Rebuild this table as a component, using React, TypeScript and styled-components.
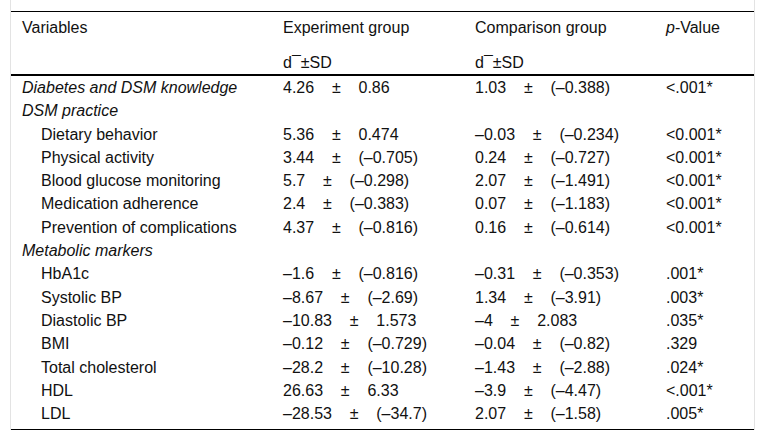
import React from "react";
import styled, { createGlobalStyle } from "styled-components";

const Global = createGlobalStyle`
  html, body { margin: 0; padding: 0; background: #fff; }
  body { font-family: "Liberation Sans", Arial, sans-serif; }
`;

const Frame = styled.div`
  margin: 0 10px;
  width: 743px;
  padding-top: 11px;
  border-left: 1px solid #e3e3e3;
  border-right: 1px solid #e3e3e3;
`;

const Table = styled.table`
  width: 743px;
  table-layout: fixed;
  border-collapse: collapse;
  border-top: 1px solid #000;
  border-bottom: 1px solid #000;
  font-size: 16px;
  color: #111;
`;

const HeadRow = styled.tr<{ $last?: boolean }>`
  border-bottom: ${(p) => (p.$last ? "2px solid #000" : "none")};
`;

const Th = styled.th<{ $last?: boolean }>`
  text-align: left;
  font-weight: normal;
  line-height: 23px;
  padding: ${(p) => (p.$last ? "4px 11px 0" : "4px 11px 8px")};
  vertical-align: top;
  white-space: nowrap;
`;

const Row = styled.tr<{ $end?: boolean }>`
  & > td { padding-bottom: ${(p) => (p.$end ? "4px" : "0")}; }
`;

const Td = styled.td<{ $indent?: boolean; $group?: boolean }>`
  line-height: 23.3px;
  padding: 0 11px 0 ${(p) => (p.$indent ? "30px" : "11px")};
  font-style: ${(p) => (p.$group ? "italic" : "normal")};
  white-space: pre;
`;

const Em = styled.i``;

type Item = { label: string; kind: "group" | "item" | "top"; e?: string; c?: string; p?: string };

const rows: Item[] = [
  { label: "Diabetes and DSM knowledge", kind: "top", e: "4.26    ±    0.86", c: "1.03    ±    (–0.388)", p: "<.001*" },
  { label: "DSM practice", kind: "group" },
  { label: "Dietary behavior", kind: "item", e: "5.36    ±    0.474", c: "–0.03    ±    (–0.234)", p: "<0.001*" },
  { label: "Physical activity", kind: "item", e: "3.44    ±    (–0.705)", c: "0.24    ±    (–0.727)", p: "<0.001*" },
  { label: "Blood glucose monitoring", kind: "item", e: "5.7    ±    (–0.298)", c: "2.07    ±    (–1.491)", p: "<0.001*" },
  { label: "Medication adherence", kind: "item", e: "2.4    ±    (–0.383)", c: "0.07    ±    (–1.183)", p: "<0.001*" },
  { label: "Prevention of complications", kind: "item", e: "4.37    ±    (–0.816)", c: "0.16    ±    (–0.614)", p: "<0.001*" },
  { label: "Metabolic markers", kind: "group" },
  { label: "HbA1c", kind: "item", e: "–1.6    ±    (–0.816)", c: "–0.31    ±    (–0.353)", p: ".001*" },
  { label: "Systolic BP", kind: "item", e: "–8.67    ±    (–2.69)", c: "1.34    ±    (–3.91)", p: ".003*" },
  { label: "Diastolic BP", kind: "item", e: "–10.83    ±    1.573", c: "–4    ±    2.083", p: ".035*" },
  { label: "BMI", kind: "item", e: "–0.12    ±    (–0.729)", c: "–0.04    ±    (–0.82)", p: ".329" },
  { label: "Total cholesterol", kind: "item", e: "–28.2    ±    (–10.28)", c: "–1.43    ±    (–2.88)", p: ".024*" },
  { label: "HDL", kind: "item", e: "26.63    ±    6.33", c: "–3.9    ±    (–4.47)", p: "<.001*" },
  { label: "LDL", kind: "item", e: "–28.53    ±    (–34.7)", c: "2.07    ±    (–1.58)", p: ".005*" },
];

export default function App() {
  return (
    <>
      <Global />
      <Frame>
        <Table>
          <colgroup>
            <col style={{ width: 261 }} />
            <col style={{ width: 192 }} />
            <col style={{ width: 191 }} />
            <col style={{ width: 99 }} />
          </colgroup>
          <thead>
            <HeadRow>
              <Th>Variables</Th>
              <Th>Experiment group</Th>
              <Th>Comparison group</Th>
              <Th>
                <Em>p</Em>-Value
              </Th>
            </HeadRow>
            <HeadRow $last>
              <Th $last />
              <Th $last>d¯±SD</Th>
              <Th $last>d¯±SD</Th>
              <Th $last />
            </HeadRow>
          </thead>
          <tbody>
            {rows.map((r, i) => (
              <Row key={r.label} $end={i === rows.length - 1}>
                <Td $indent={r.kind === "item"} $group={r.kind !== "item"}>
                  {r.label}
                </Td>
                <Td>{r.e ?? ""}</Td>
                <Td>{r.c ?? ""}</Td>
                <Td>{r.p ?? ""}</Td>
              </Row>
            ))}
          </tbody>
        </Table>
      </Frame>
    </>
  );
}
